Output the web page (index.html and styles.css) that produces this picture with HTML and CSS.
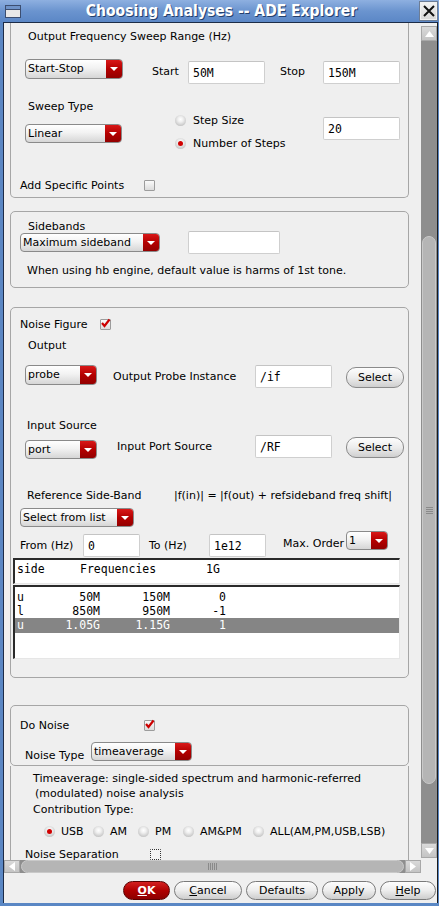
FILE: index.html
```html
<!DOCTYPE html>
<html>
<head>
<meta charset="utf-8">
<title>Choosing Analyses -- ADE Explorer</title>
<link rel="stylesheet" href="styles.css">
</head>
<body>
<div class="window">
  <div class="titlebar">
    <div class="ticon"><div class="ticon-bar"></div></div>
    <div class="title">Choosing Analyses -- ADE Explorer</div>
    <div class="tclose">
      <svg width="14" height="14" viewBox="0 0 14 14"><path d="M2 2 L12 12 M12 2 L2 12" stroke="#111" stroke-width="2" fill="none"/></svg>
    </div>
  </div>
  <div class="client">
    <div class="scrollrow">
      <div class="viewport">
        <!-- Box 1 -->
        <div class="box box1">
          <div class="b1-a">Output Frequency Sweep Range (Hz)</div>
          <div class="b1-b">
            <div class="dd w98"><span class="dd-lbl">Start-Stop</span><span class="dd-arr"><i class="tri"></i></span></div>
            <span class="lbl-start">Start</span>
            <div class="inp w77">50M</div>
            <span class="lbl-stop">Stop</span>
            <div class="inp w77">150M</div>
          </div>
          <div class="b1-cd">
            <div class="col-left">
              <div class="sweep-lbl">Sweep Type</div>
              <div class="dd w97 h19"><span class="dd-lbl">Linear</span><span class="dd-arr"><i class="tri"></i></span></div>
            </div>
            <div class="col-mid">
              <div class="radrow"><span class="radio"></span><span class="radtxt">Step Size</span></div>
              <div class="radrow"><span class="radio on"></span><span class="radtxt">Number of Steps</span></div>
            </div>
            <div class="col-right">
              <div class="inp w77">20</div>
            </div>
          </div>
          <div class="b1-e">
            <span class="lbl-add">Add Specific Points</span>
            <span class="check"></span>
          </div>
        </div>

        <!-- Box 2 -->
        <div class="box box2">
          <div class="b2-lbl">Sidebands</div>
          <div class="b2-row">
            <div class="dd w140 h19"><span class="dd-lbl">Maximum sideband</span><span class="dd-arr"><i class="tri"></i></span></div>
            <div class="inp w92"></div>
          </div>
          <div class="b2-note">When using hb engine, default value is harms of 1st tone.</div>
        </div>

        <!-- Box 3 -->
        <div class="box box3">
          <div class="b3-nf">
            <span class="lbl-nf">Noise Figure</span>
            <span class="check"><svg class="tick" width="11" height="11" viewBox="0 0 11 11"><path d="M2 5 L4.5 8 L9.5 1.5" stroke="#cc0000" stroke-width="2.2" fill="none"/></svg></span>
          </div>
          <div class="b3-out">Output</div>
          <div class="b3-row1">
            <div class="dd w72"><span class="dd-lbl">probe</span><span class="dd-arr"><i class="tri"></i></span></div>
            <span class="lbl-probe">Output Probe Instance</span>
            <div class="inp w77">/if</div>
            <div class="btn-sel">Select</div>
          </div>
          <div class="b3-in">Input Source</div>
          <div class="b3-row2">
            <div class="dd w72 h19 dd-port"><span class="dd-lbl">port</span><span class="dd-arr"><i class="tri"></i></span></div>
            <span class="lbl-port">Input Port Source</span>
            <div class="inp w77">/RF</div>
            <div class="btn-sel">Select</div>
          </div>
          <div class="b3-ref">
            <span class="lbl-ref">Reference Side-Band</span>
            <span>|f(in)| = |f(out) + refsideband freq shift|</span>
          </div>
          <div class="b3-sel">
            <div class="dd w114 h19"><span class="dd-lbl">Select from list</span><span class="dd-arr"><i class="tri"></i></span></div>
          </div>
          <div class="b3-from">
            <span class="lbl-from">From (Hz)</span>
            <div class="inp w57">0</div>
            <span class="lbl-to">To (Hz)</span>
            <div class="inp w57">1e12</div>
            <span class="lbl-max">Max. Order</span>
            <div class="dd w42 h19"><span class="dd-lbl">1</span><span class="dd-arr"><i class="tri"></i></span></div>
          </div>
          <div class="list-head">
            <span class="lh-side">side</span><span class="lh-freq">Frequencies</span><span class="lh-g">1G</span>
          </div>
          <div class="list-body">
            <div class="lrow"><span class="c0">u</span><span class="c1">50M</span><span class="c2">150M</span><span class="c3">0</span></div>
            <div class="lrow"><span class="c0">l</span><span class="c1">850M</span><span class="c2">950M</span><span class="c3">-1</span></div>
            <div class="lrow sel"><span class="c0">u</span><span class="c1">1.05G</span><span class="c2">1.15G</span><span class="c3">1</span></div>
          </div>
        </div>

        <!-- Box 4 -->
        <div class="box box4">
          <div class="b4-dn">
            <span class="lbl-dn">Do Noise</span>
            <span class="check"><svg class="tick" width="11" height="11" viewBox="0 0 11 11"><path d="M2 5 L4.5 8 L9.5 1.5" stroke="#cc0000" stroke-width="2.2" fill="none"/></svg></span>
          </div>
          <div class="b4-nt">
            <span class="lbl-nt">Noise Type</span>
            <div class="dd w101 h19"><span class="dd-lbl">timeaverage</span><span class="dd-arr"><i class="tri"></i></span></div>
          </div>
        </div>

        <!-- Box 5 -->
        <div class="box box5">
          <div class="b5-t1">Timeaverage: single-sided spectrum and harmonic-referred</div>
          <div class="b5-t2">(modulated) noise analysis</div>
          <div class="b5-ct">Contribution Type:</div>
          <div class="b5-radios">
            <div class="ri w49"><span class="radio on"></span><span class="radtxt">USB</span></div>
            <div class="ri w45"><span class="radio"></span><span class="radtxt">AM</span></div>
            <div class="ri w45"><span class="radio"></span><span class="radtxt">PM</span></div>
            <div class="ri w70"><span class="radio"></span><span class="radtxt">AM&amp;PM</span></div>
            <div class="ri"><span class="radio"></span><span class="radtxt">ALL(AM,PM,USB,LSB)</span></div>
          </div>
          <div class="b5-ns">
            <span class="lbl-ns">Noise Separation</span>
            <span class="check dashed"></span>
          </div>
        </div>
      </div>
      <div class="vscroll">
        <div class="sarrow"><svg width="9" height="6" viewBox="0 0 9 6"><path d="M0 6 L4.5 0 L9 6 Z" fill="#fff"/></svg></div>
        <div class="vtrough">
          <div class="vthumb"><div class="vgrip"><i></i><i></i><i></i><i></i></div></div>
        </div>
        <div class="sarrow"><svg width="9" height="6" viewBox="0 0 9 6"><path d="M0 0 L4.5 6 L9 0 Z" fill="#fff"/></svg></div>
      </div>
    </div>
    <div class="hrow">
      <div class="harrow"><svg width="6" height="9" viewBox="0 0 6 9"><path d="M6 0 L0 4.5 L6 9 Z" fill="#fff"/></svg></div>
      <div class="htrough"><div class="hthumb"><div class="hgrip"><i></i><i></i><i></i><i></i><i></i></div></div></div>
      <div class="harrow"><svg width="6" height="9" viewBox="0 0 6 9"><path d="M0 0 L6 4.5 L0 9 Z" fill="#fff"/></svg></div>
      <div class="corner"></div>
    </div>
    <div class="buttons">
      <div class="btn ok"><u>O</u>K</div>
      <div class="btn cancel"><u>C</u>ancel</div>
      <div class="btn defaults">Defaults</div>
      <div class="btn apply">Apply</div>
      <div class="btn help"><u>H</u>elp</div>
    </div>
  </div>
</div>
</body>
</html>
```

FILE: styles.css
```css
* { box-sizing: border-box; }
html, body { margin: 0; padding: 0; }
body {
  width: 439px;
  height: 906px;
  overflow: hidden;
  font-family: "DejaVu Sans", "Noto Sans", sans-serif;
  font-size: 11px;
  color: #000;
  background: #4f7fc0;
}
.window {
  width: 439px;
  height: 906px;
  display: flex;
  flex-direction: column;
  background: #5a87c4;
}

/* title bar */
.titlebar {
  height: 22px;
  flex: none;
  display: flex;
  align-items: center;
  background: linear-gradient(#8eb0e0, #6b94cf 50%, #5b87c6);
}
.ticon {
  width: 16px;
  height: 13px;
  margin-left: 5px;
  border: 1px solid #3c4e70;
  background: #e8e8e8;
}
.ticon-bar { height: 4px; background: #6f93c8; border-bottom: 1px solid #3c4e70; }
.title {
  flex: 1;
  text-align: center;
  color: #fff;
  font-family: "DejaVu Sans", sans-serif;
  font-stretch: condensed;
  font-weight: bold;
  font-size: 15.5px;
  text-shadow: 1px 1px 0 #24406c;
  padding-left: 2px;
}
.tclose {
  width: 17px;
  height: 18px;
  margin-right: 2px;
  border: 1px solid #f0f0f0;
  outline: 1px solid #6d7d95;
  background: linear-gradient(#f2f2f2, #d8d8d8);
  display: flex;
  align-items: center;
  justify-content: center;
}

/* client */
.client {
  flex: 1;
  margin: 0 1px 3px 3px;
  border-top: 1px solid #1c2c48;
  border-left: 1px solid #1c2c48;
  border-right: 1px solid #1a1a1a;
  background: #efefef;
  display: flex;
  flex-direction: column;
}
.scrollrow {
  height: 837px;
  flex: none;
  display: flex;
}
.viewport {
  width: 417px;
  height: 837px;
  overflow: hidden;
  padding-left: 6px;
}

/* boxes */
.box {
  width: 399px;
  border: 1px solid #a6a6a6;
  border-radius: 5px;
}
.box1 { height: 175px; border-top: none; border-radius: 0 0 5px 5px; }
.box2 { margin-top: 13px; height: 77px; }
.box3 { margin-top: 19px; height: 371px; }
.box4 { margin-top: 27px; height: 61px; }
.box5 { height: 120px; border-top: none; border-radius: 0; }

/* dropdown */
.dd {
  display: flex;
  height: 20px;
  border: 1px solid #8a8a8a;
  border-radius: 4px;
  background: linear-gradient(#ffffff, #f2f2f2 45%, #d6d6d6);
  overflow: hidden;
  flex: none;
}
.dd.h19 { height: 19px; }
.dd-lbl {
  flex: 1;
  padding-left: 2px;
  line-height: 18px;
  font-size: 11px;
  white-space: nowrap;
  overflow: hidden;
}
.dd.h19 .dd-lbl { line-height: 17px; }
.dd-arr {
  width: 16px;
  flex: none;
  background: linear-gradient(#d81818, #b40000 50%, #930000);
  display: flex;
  align-items: center;
  justify-content: center;
}
.tri {
  display: block;
  width: 0;
  height: 0;
  border-left: 4px solid transparent;
  border-right: 4px solid transparent;
  border-top: 4px solid #fff;
}
.w98 { width: 98px; }
.w97 { width: 97px; }
.w140 { width: 140px; }
.w72 { width: 72px; }
.w114 { width: 114px; }
.w42 { width: 42px; }
.w101 { width: 101px; }

/* input */
.inp {
  height: 23px;
  flex: none;
  background: #fff;
  border: 1px solid #cfcfcf;
  border-top-color: #c4c4c4;
  border-radius: 2px;
  padding-left: 4px;
  font-family: "DejaVu Sans Mono", "Liberation Mono", monospace;
  font-size: 11.5px;
  line-height: 22px;
}
.w77 { width: 77px; }
.w92 { width: 92px; }
.w57 { width: 57px; }

/* radio & check */
.radio {
  width: 11px;
  height: 11px;
  border-radius: 50%;
  flex: none;
  background: radial-gradient(circle at 50% 40%, #ffffff 0, #f0f0f0 30%, #c6c6c6 75%, #9a9a9a 100%);
  position: relative;
}
.radio.on::after {
  content: "";
  position: absolute;
  left: 3px;
  top: 3px;
  width: 5px;
  height: 5px;
  border-radius: 50%;
  background: #d00000;
}
.check {
  width: 11px;
  height: 11px;
  flex: none;
  border: 1px solid #9c9c9c;
  border-radius: 1px;
  background: linear-gradient(#fafafa, #dcdcdc);
  position: relative;
}
.check .tick { position: absolute; left: -1px; top: -2px; }
.check.dashed { border: 1px dotted #333; background: #f4f4f4; }

/* select button */
.btn-sel {
  width: 58px;
  height: 21px;
  flex: none;
  margin-top: 2px;
  margin-left: 14px;
  border: 1px solid #8a8a8a;
  border-radius: 10px;
  background: linear-gradient(#fdfdfd, #ececec 50%, #cfcfcf);
  text-align: center;
  line-height: 19px;
  font-size: 11px;
}

/* box 1 */
.b1-a { height: 28px; line-height: 28px; padding-left: 17px; }
.b1-b { margin-top: 8px; height: 25px; display: flex; align-items: flex-start; padding-left: 14px; }
.b1-b .inp { margin-top: 2px; }
.lbl-start { margin-left: 29px; width: 36px; line-height: 26px; }
.lbl-stop { margin-left: 15px; width: 43px; line-height: 26px; }
.b1-cd { margin-top: 13px; display: flex; padding-left: 14px; height: 58px; }
.col-left { width: 98px; }
.sweep-lbl { line-height: 20px; padding-left: 3px; }
.col-left .dd { margin-top: 7px; }
.col-mid { margin-left: 52px; width: 148px; margin-top: 12px; }
.radrow { height: 23px; display: flex; align-items: center; }
.radtxt { margin-left: 7px; white-space: nowrap; }
.col-right { margin-top: 20px; }
.b1-e { margin-top: 20px; height: 20px; display: flex; align-items: center; padding-left: 9px; }
.lbl-add { width: 124px; }

/* box 2 */
.b2-lbl { padding-top: 9px; line-height: 12px; padding-left: 17px; }
.b2-row { height: 19px; display: flex; align-items: center; padding-left: 9px; }
.b2-row .inp { margin-left: 28px; }
.b2-note { margin-top: 10px; line-height: 18px; padding-left: 16px; }

/* box 3 */
.b3-nf { padding-top: 8px; height: 24px; display: flex; align-items: center; padding-left: 9px; }
.lbl-nf { width: 80px; }
.b3-out { margin-top: 6px; line-height: 16px; padding-left: 17px; }
.b3-row1 { margin-top: 11px; height: 24px; display: flex; align-items: flex-start; padding-left: 14px; }
.lbl-probe { margin-left: 16px; width: 142px; line-height: 24px; }
.b3-in { margin-top: 29px; line-height: 16px; padding-left: 16px; }
.b3-row2 { margin-top: 1px; height: 24px; display: flex; align-items: flex-start; padding-left: 14px; }
.dd-port { margin-top: 5px; }
.lbl-port { margin-left: 20px; width: 138px; line-height: 24px; }
.b3-ref { margin-top: 29px; line-height: 16px; padding-left: 16px; display: flex; }
.lbl-ref { width: 147px; }
.b3-sel { margin-top: 4px; padding-left: 9px; }
.b3-from { margin-top: 4px; height: 26px; display: flex; align-items: flex-start; padding-left: 9px; }
.b3-from .inp { margin-top: 3px; }
.lbl-from { width: 63px; line-height: 24px; margin-top: 3px; }
.lbl-to { margin-left: 9px; width: 60px; line-height: 24px; margin-top: 3px; }
.lbl-max { margin-left: 17px; width: 63px; line-height: 24px; margin-top: 1px; }

.list-head {
  margin-top: 1px;
  margin-left: 2px;
  width: 387px;
  height: 26px;
  background: #fff;
  border-top: 2px solid #2a2a2a;
  border-left: 2px solid #2a2a2a;
  border-right: 1px solid #e6e6e6;
  border-bottom: 1px solid #e6e6e6;
  padding-top: 2px;
  padding-left: 2px;
  display: flex;
  font-family: "DejaVu Sans Mono", "Liberation Mono", monospace;
  font-size: 11.5px;
  line-height: 14px;
}
.lh-side { width: 63px; }
.lh-freq { width: 126px; }
.list-body {
  margin-top: 1px;
  margin-left: 2px;
  width: 387px;
  height: 74px;
  background: #fff;
  border-top: 2px solid #2a2a2a;
  border-left: 2px solid #2a2a2a;
  border-right: 1px solid #e6e6e6;
  border-bottom: 1px solid #e6e6e6;
  padding-top: 3px;
  font-family: "DejaVu Sans Mono", "Liberation Mono", monospace;
  font-size: 11.5px;
}
.lrow { height: 14px; line-height: 14px; display: flex; padding-left: 2px; }
.lrow.sel { height: 15px; line-height: 15px; background: #858585; color: #fff; }
.c0 { width: 30px; }
.c1 { width: 53px; text-align: right; }
.c2 { width: 70px; text-align: right; }
.c3 { width: 56px; text-align: right; }

/* box 4 */
.b4-dn { padding-top: 11px; height: 27px; display: flex; align-items: center; padding-left: 9px; }
.lbl-dn { width: 124px; }
.b4-nt { margin-top: 9px; height: 20px; display: flex; align-items: flex-start; padding-left: 14px; }
.lbl-nt { width: 66px; line-height: 20px; margin-top: 4px; }

/* box 5 */
.b5-t1 { padding-top: 5px; line-height: 15px; padding-left: 22px; }
.b5-t2 { line-height: 15px; padding-left: 24px; }
.b5-ct { line-height: 18px; padding-left: 22px; }
.b5-radios { margin-top: 3px; height: 18px; display: flex; align-items: center; padding-left: 33px; }
.ri { display: flex; align-items: center; flex: none; }
.ri .radtxt { margin-left: 6px; }
.w49 { width: 49px; }
.w45 { width: 45px; }
.w70 { width: 70px; }
.b5-ns { margin-top: 5px; height: 18px; display: flex; align-items: center; padding-left: 14px; }
.lbl-ns { width: 125px; }

/* vertical scrollbar */
.vscroll {
  width: 16px;
  flex: none;
  margin: 3px 0 2px 0;
  display: flex;
  flex-direction: column;
}
.sarrow {
  height: 15px;
  flex: none;
  background: linear-gradient(#dadada, #c4c4c4);
  border: 1px solid #a8a8a8;
  display: flex;
  align-items: center;
  justify-content: center;
}
.vtrough {
  flex: 1;
  background: #8e8e8e;
  padding: 195px 1px 0 1px;
}
.vthumb {
  height: 548px;
  border-radius: 7px;
  background: #b5b5b5;
  border: 1px solid #c9c9c9;
  display: flex;
  align-items: center;
  justify-content: center;
}
.vgrip { display: flex; flex-direction: column; gap: 1px; }
.vgrip i { display: block; width: 7px; height: 1px; background: #8a8a8a; }

/* horizontal scrollbar */
.hrow { height: 13px; flex: none; display: flex; }
.harrow {
  width: 16px;
  flex: none;
  background: linear-gradient(#dadada, #c4c4c4);
  border: 1px solid #a8a8a8;
  display: flex;
  align-items: center;
  justify-content: center;
}
.htrough { width: 385px; flex: none; background: #8e8e8e; padding: 0 1px; }
.hthumb {
  height: 13px;
  border-radius: 7px;
  background: #b5b5b5;
  border: 1px solid #c9c9c9;
  display: flex;
  align-items: center;
  justify-content: center;
}
.hgrip { display: flex; gap: 1px; }
.hgrip i { display: block; width: 1px; height: 7px; background: #8a8a8a; }
.corner { flex: 1; background: #efefef; }

/* bottom buttons */
.buttons {
  flex: 1;
  display: flex;
  justify-content: flex-end;
  align-items: flex-start;
  padding-top: 8px;
  padding-right: 1px;
  gap: 4px;
}
.btn {
  height: 19px;
  border: 1px solid #7a7a7a;
  border-radius: 10px;
  background: linear-gradient(#fdfdfd, #ededed 50%, #cdcdcd);
  text-align: center;
  line-height: 17px;
  font-size: 11px;
}
.btn u { text-decoration: underline; }
.ok {
  width: 47px;
  background: linear-gradient(#d42020, #b00000 50%, #8c0000);
  border-color: #5a0000;
  color: #fff;
  font-weight: bold;
}
.cancel { width: 68px; }
.defaults { width: 72px; }
.apply { width: 54px; }
.help { width: 56px; }
```
